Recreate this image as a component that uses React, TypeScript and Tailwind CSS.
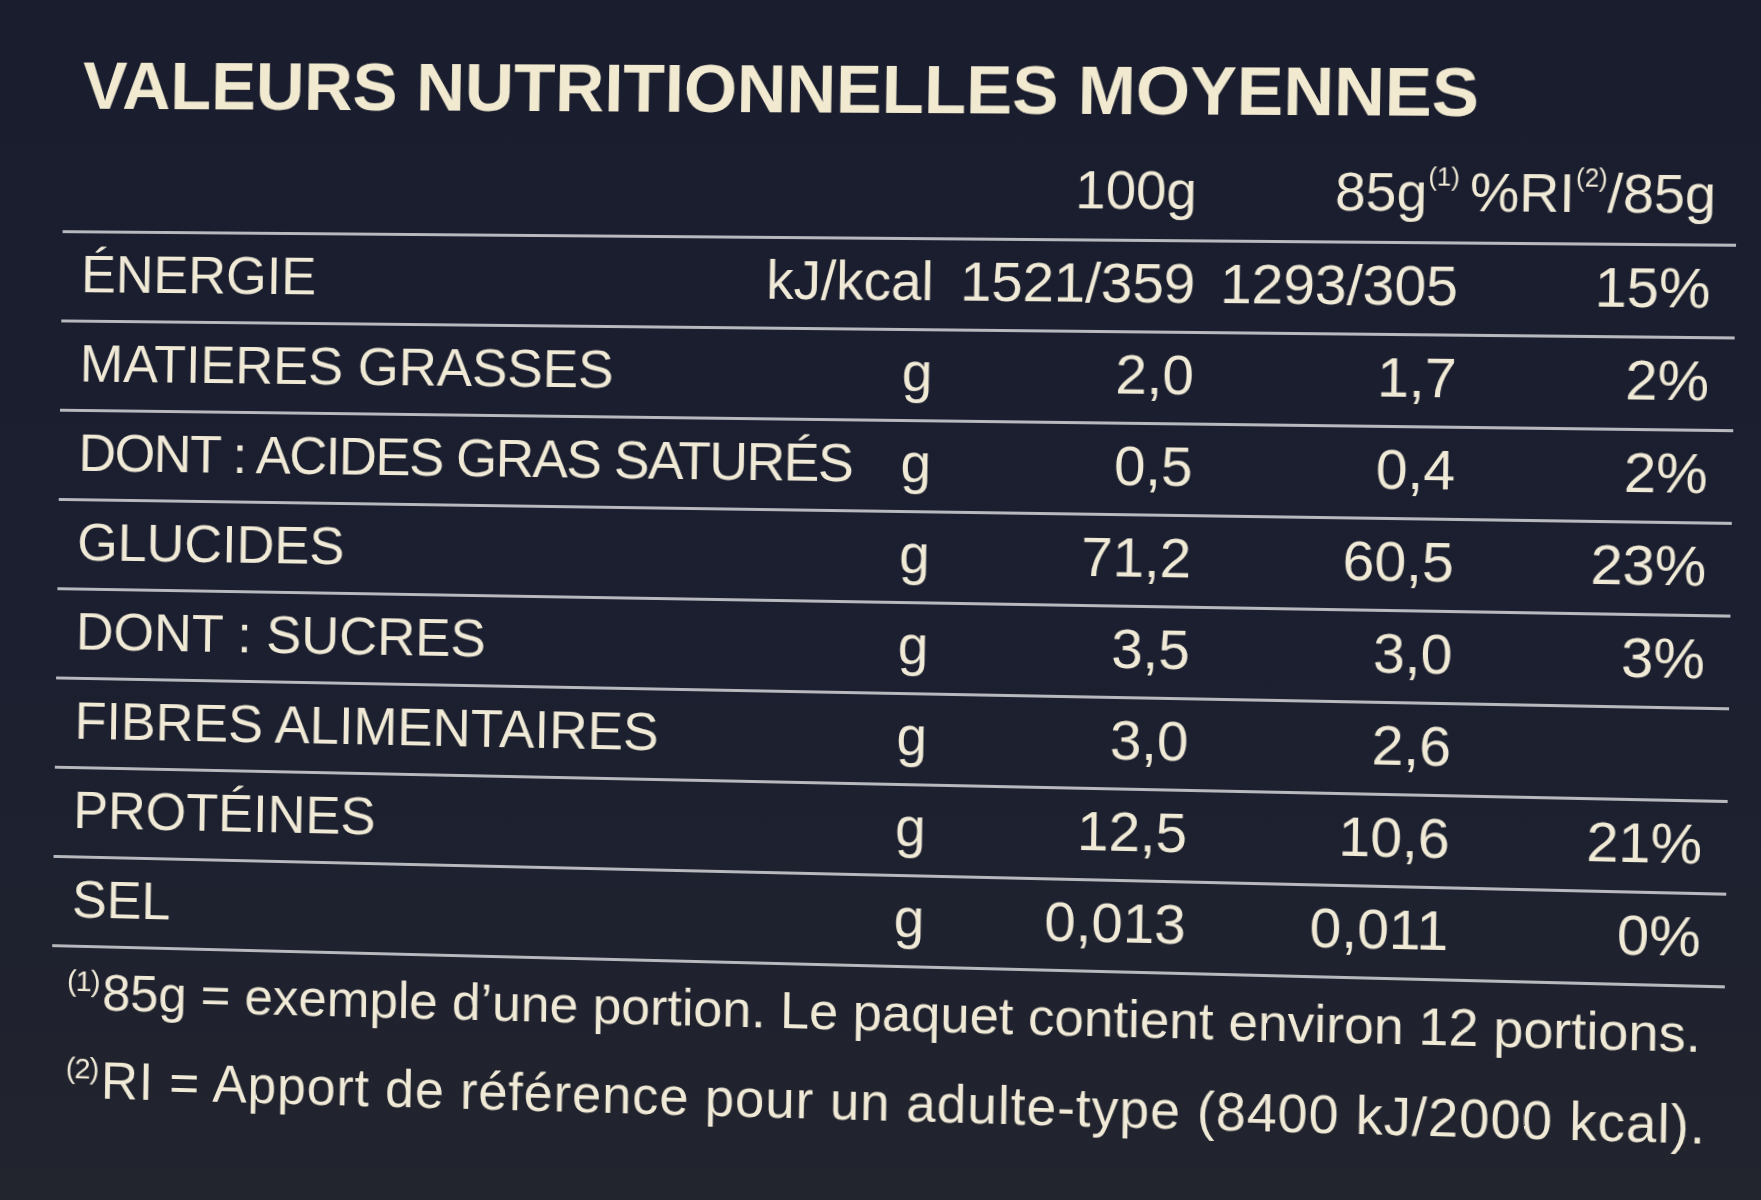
type Row = {
  label: string;
  unit: string;
  a: string;
  b: string;
  c: string;
  tight?: boolean;
};

const rows: Row[] = [
  { label: 'ÉNERGIE', unit: 'kJ/kcal', a: '1521/359', b: '1293/305', c: '15%' },
  { label: 'MATIERES GRASSES', unit: 'g', a: '2,0', b: '1,7', c: '2%' },
  { label: 'DONT : ACIDES GRAS SATURÉS', unit: 'g', a: '0,5', b: '0,4', c: '2%', tight: true },
  { label: 'GLUCIDES', unit: 'g', a: '71,2', b: '60,5', c: '23%' },
  { label: 'DONT : SUCRES', unit: 'g', a: '3,5', b: '3,0', c: '3%' },
  { label: 'FIBRES ALIMENTAIRES', unit: 'g', a: '3,0', b: '2,6', c: '' },
  { label: 'PROTÉINES', unit: 'g', a: '12,5', b: '10,6', c: '21%' },
  { label: 'SEL', unit: 'g', a: '0,013', b: '0,011', c: '0%' },
];

function Sup({ children }: { children: string }) {
  return <span className="align-top text-[25px] leading-none ml-[1px]">{children}</span>;
}

export default function App() {
  return (
    <main className="h-screen w-full overflow-hidden bg-[linear-gradient(180deg,#191d2d_0%,#1b1f2f_55%,#22242e_100%)] text-[#efe9d6] font-['Liberation_Sans',Arial,sans-serif]">
      <div className="h-full w-full origin-[900px_535px] [transform:perspective(2000px)_rotateY(-2.6deg)_rotate(0.85deg)]">
        {/* Title */}
        <h1 className="pt-[55px] pl-[60px] text-[69px] leading-none font-bold text-[#f1e9d0] whitespace-nowrap">
          VALEURS NUTRITIONNELLES MOYENNES
        </h1>

        {/* Column heads */}
        <div className="mt-[37px] ml-[41px] w-[1676px] pl-[20px] pr-[24px] flex items-baseline text-[54px] leading-none whitespace-nowrap">
          <div className="flex-1" />
          <div className="w-[170px]" />
          <div className="w-[260px] flex justify-end">100g</div>
          <div className="w-[258px] flex justify-end">
            <span>
              85g<Sup>(1)</Sup>
            </span>
          </div>
          <div className="w-[245px] flex justify-end">
            <span className="mr-[-4px]">
              %RI<Sup>(2)</Sup>/85g
            </span>
          </div>
        </div>

        {/* Table */}
        <div className="mt-[22px] ml-[41px] w-[1676px]">
          {rows.map(r => (
            <div
              key={r.label}
              className="h-[91px] border-t-[3px] border-[#b7b9be] pt-[13px] pl-[20px] pr-[24px] flex items-baseline whitespace-nowrap leading-none"
            >
              <div className={`w-[699px] text-[54px] ${r.tight ? 'tracking-[-1.5px]' : ''}`}>{r.label}</div>
              <div className="w-[170px] flex justify-end text-[55px]">{r.unit}</div>
              <div className="w-[260px] flex justify-end text-[56px]">{r.a}</div>
              <div className="w-[258px] flex justify-end text-[56px]">{r.b}</div>
              <div className="w-[245px] flex justify-end text-[56px]">{r.c}</div>
            </div>
          ))}
          <div className="h-[3px] bg-[#b7b9be]" />
        </div>

        {/* Footnotes */}
        <div className="pl-[57px] whitespace-nowrap">
          <p className="mt-[19px] text-[52.5px] leading-none">
            <span className="align-top text-[30px] leading-none tracking-[-1px] mr-[3px]">(1)</span>
            85g = exemple d’une portion. Le paquet contient environ 12 portions.
          </p>
          <p className="mt-[36px] text-[53px] leading-none tracking-[1px]">
            <span className="align-top text-[30px] leading-none tracking-[-1px] mr-[3px]">(2)</span>
            RI = Apport de référence pour un adulte-type (8400 kJ/2000 kcal).
          </p>
        </div>
      </div>
    </main>
  );
}
